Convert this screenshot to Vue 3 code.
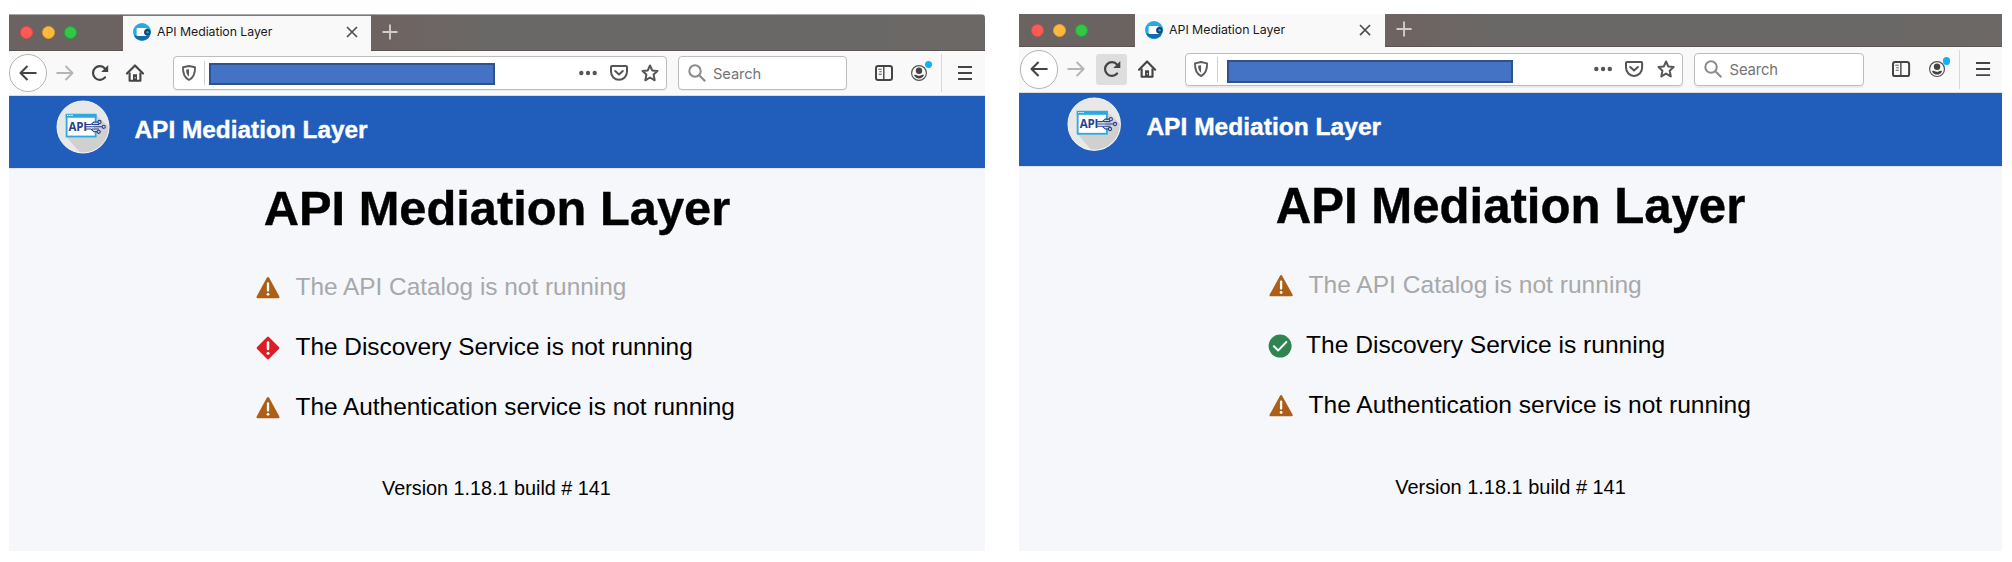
<script setup>
const windows = [
  {
    id: 'left',
    services: [
      { icon: 'warning', text: 'The API Catalog is not running', muted: true },
      { icon: 'danger', text: 'The Discovery Service is not running' },
      { icon: 'warning', text: 'The Authentication service is not running' },
    ],
  },
  {
    id: 'right',
    services: [
      { icon: 'warning', text: 'The API Catalog is not running', muted: true },
      { icon: 'success', text: 'The Discovery Service is running' },
      { icon: 'warning', text: 'The Authentication service is not running' },
    ],
  },
]
</script>

<template>
  <div class="stage">
    <section v-for="w in windows" :key="w.id" class="window" :class="w.id">
      <div class="tabbar">
        <div class="lights"><i class="red"></i><i class="amber"></i><i class="green"></i></div>
        <div class="tab">
          <svg class="favicon" viewBox="0 0 18 18">
            <circle cx="9" cy="9" r="9" fill="#27a9e1" />
            <path d="M1 12.5h16A9 9 0 0 1 1 12.5z" fill="#1769aa" />
            <rect x="3.6" y="5" width="10" height="8" rx="1" fill="#fff" />
            <circle cx="14.3" cy="9.2" r="3.2" fill="#173f68" />
            <circle cx="14.5" cy="9.2" r="1.2" fill="#27a9e1" />
          </svg>
          <span class="tab-title">API Mediation Layer</span>
          <svg class="close" viewBox="0 0 12 12"><path d="M1 1l10 10M11 1L1 11" stroke="#4c4c4c" stroke-width="1.6" fill="none" /></svg>
        </div>
        <svg class="plus" viewBox="0 0 16 16"><path d="M8 .5v15M.5 8h15" stroke="#cfccca" stroke-width="1.9" fill="none" /></svg>
      </div>

      <div class="toolbar">
        <div class="back">
          <svg viewBox="0 0 18 16"><path d="M17.5 8H1.5M8.5 1L1.5 8l7 7" fill="none" stroke="#444" stroke-width="2.1" stroke-linejoin="round" /></svg>
        </div>
        <svg class="forward" viewBox="0 0 18 16"><path d="M.5 8h16M9.5 1l7 7-7 7" fill="none" stroke="#b5b5b5" stroke-width="2" stroke-linejoin="round" /></svg>
        <div class="reload">
          <svg viewBox="0 0 18 18">
            <path d="M14 13.4A6.8 6.8 0 1 1 14 4.6" fill="none" stroke="#444" stroke-width="2.2" stroke-linecap="round" />
            <path d="M17.2 1v7h-7z" fill="#444" />
          </svg>
        </div>
        <svg class="home" viewBox="0 0 18 18">
          <path d="M1 9.6L9 1.4l8 8.2" fill="none" stroke="#444" stroke-width="2.1" stroke-linecap="round" stroke-linejoin="round" />
          <path d="M3.6 8.5v8.2h10.8V8.5" fill="none" stroke="#444" stroke-width="2.1" stroke-linejoin="round" />
          <path d="M7 16.5v-6.3h4v6.3z" fill="#444" /><rect x="8.7" y="13" width="1.1" height="1.4" fill="#ddd" />
        </svg>

        <div class="urlbar">
          <svg class="shield" viewBox="0 0 14 16">
            <path d="M7 1l6 1.3c.2 6-1 10.2-6 12.7C2 12.500.8 8.300 1 2.300z" fill="none" stroke="#5c5c5c" stroke-width="1.9" stroke-linejoin="round" />
            <path d="M7 4.100v7.500C4.700 9.800 4.100 7.500 4.100 4.700z" fill="#5c5c5c" />
          </svg>
          <span class="rule"></span>
          <span class="redacted"></span>
          <svg class="dots" viewBox="0 0 18 16"><g fill="#555"><circle cx="2.300" cy="8" r="2.200" /><circle cx="9" cy="8" r="2.200" /><circle cx="15.700" cy="8" r="2.200" /></g></svg>
          <svg class="pocket" viewBox="0 0 18 16">
            <path d="M2 1h14q1 0 1 1v4.800a8 8 0 0 1-16 0V2q0-1 1-1z" fill="none" stroke="#555" stroke-width="2" />
            <path d="M5.200 6L9 9.500 12.800 6" fill="none" stroke="#555" stroke-width="2" stroke-linecap="round" stroke-linejoin="round" />
          </svg>
          <svg class="star" viewBox="0 0 18 18"><path d="M9 1.500l2.200 4.900 5.300.6-3.900 3.600 1.100 5.700L9 13.500l-4.700 2.800 1.100-5.700L1.500 7l5.300-.6z" fill="none" stroke="#555" stroke-width="2" stroke-linejoin="round" /></svg>
        </div>

        <div class="search">
          <svg viewBox="0 0 18 18"><circle cx="7" cy="7" r="5.700" fill="none" stroke="#8b8b8b" stroke-width="2" /><path d="M11.200 11.200l6 6" stroke="#8b8b8b" stroke-width="2.100" /></svg>
          <span>Search</span>
        </div>

        <svg class="sidebar" viewBox="0 0 18 16">
          <rect x="1" y="1" width="16" height="14" rx="2.200" fill="none" stroke="#444" stroke-width="2" />
          <path d="M8.800 1v14" stroke="#444" stroke-width="1.400" />
          <path d="M3.300 4.200h3.400M4.300 6.700h2.400M3.700 9.200h3" stroke="#555" stroke-width="1.100" />
        </svg>
        <div class="account">
          <svg viewBox="0 0 16 16">
            <circle cx="8" cy="8" r="7.400" fill="none" stroke="#555" stroke-width="1.200" />
            <circle cx="8" cy="5.700" r="3.200" fill="#444" />
            <path d="M3 10.100c1.300-.9 2.200-.3 3 .2q2 1 4 0c.8-.5 1.700-1.100 3-.2q-1.400 3.400-5 3.400t-5-3.400z" fill="#444" />
          </svg>
          <b class="badge"></b>
        </div>
        <span class="separator"></span>
        <svg class="menu" viewBox="0 0 14 14"><path d="M0 1h14M0 7h14M0 13h14" stroke="#444" stroke-width="1.900" /></svg>
      </div>

      <header class="header">
        <svg class="logo" viewBox="0 0 54 54">
          <circle cx="27" cy="27" r="26" fill="#e8e8e8" />
          <path d="M10.600 37L24.500 52.900A26 26 0 0 0 53 27L40 15z" fill="#d0d0d0" />
          <circle cx="27" cy="27" r="26" fill="none" stroke="#f4f5f6" stroke-width="1" />
          <rect x="10.600" y="15" width="29" height="21.500" fill="#fff" stroke="#29aae2" stroke-width="1.800" />
          <path d="M9.700 13.700h30.800v4H9.700z" fill="#29aae2" />
          <path d="M11 15.400h6" stroke="#fff" stroke-width="1.100" stroke-dasharray="1.300 .9" />
          <rect x="38" y="23" width="4" height="8" fill="#d8d8d8" />
          <text x="12.600" y="31" class="logo-text">API</text>
          <g fill="none" stroke="#2a3f93" stroke-width="1.100">
            <path d="M30 24.500h5l3-2.500h4M30 26.800h16M30 29h5l3 2.800h3M36 24.500h7M36 29h7" />
            <circle cx="43.500" cy="22" r="1.600" /><circle cx="47.700" cy="26.800" r="1.600" /><circle cx="42.700" cy="31.800" r="1.600" />
          </g>
        </svg>
        <span class="brand">API Mediation Layer</span>
      </header>

      <main class="content">
        <h1>API Mediation Layer</h1>
        <ul>
          <li v-for="s in w.services" :key="s.text" :class="[s.icon, { muted: s.muted }]">
            <svg v-if="s.icon === 'warning'" class="status" viewBox="0 0 24 24">
              <path d="M12 2.200L22.300 21H1.700z" fill="#ad5f17" stroke="#ad5f17" stroke-width="2.400" stroke-linejoin="round" />
              <path d="M12 7.500v7" stroke="#fff" stroke-width="2.300" stroke-linecap="round" /><circle cx="12" cy="18.300" r="1.400" fill="#fff" />
            </svg>
            <svg v-else-if="s.icon === 'danger'" class="status" viewBox="0 0 24 24">
              <path d="M12 2l10 10-10 10L2 12z" fill="#db1f26" stroke="#db1f26" stroke-width="2.600" stroke-linejoin="round" />
              <path d="M12 6.500v6.500" stroke="#fff" stroke-width="2.500" stroke-linecap="round" /><circle cx="12" cy="17.200" r="1.500" fill="#fff" />
            </svg>
            <svg v-else class="status" viewBox="0 0 24 24">
              <circle cx="12" cy="12" r="11.400" fill="#2f8550" />
              <path d="M5.800 12.200l4.400 4.100 8-8.300" fill="none" stroke="#fff" stroke-width="2" stroke-linecap="round" stroke-linejoin="round" />
            </svg>
            <span>{{ s.text }}</span>
          </li>
        </ul>
        <p>Version 1.18.1 build # 141</p>
      </main>
    </section>
  </div>
</template>

<style>
html, body { margin: 0; background: #fff; }
</style>

<style scoped>
.stage {
  box-sizing: border-box;
  width: 2012px;
  height: 562px;
  padding: 14px 10px 11px 9px;
  display: flex;
  justify-content: space-between;
  align-items: flex-start;
  overflow: hidden;
  background: #fff;
  font-family: "Liberation Sans", Arial, sans-serif;
  color: #000;
}
.window {
  --tabs: 37px;
  --tools: 45px;
  width: 976px;
  height: 537px;
  display: flex;
  flex-direction: column;
  overflow: hidden;
  white-space: nowrap;
  border-top-right-radius: 4px;
}
.right {
  --tabs: 32.8px;
  --tools: 45.7px;
  zoom: 1.0072;
  height: 533.2px;
  border-radius: 0;
}
svg { display: block; flex: none; overflow: visible; }

.tabbar {
  box-sizing: border-box;
  flex: none;
  height: var(--tabs);
  display: flex;
  align-items: stretch;
  background: linear-gradient(90deg, #6b6361 0, #6e6361 39%, #6a6866 48%, #6b6866 100%);
  box-shadow: inset 0 -1px #5c5452;
}
.left .tabbar { border-top: 1px solid #a3aaa8; }
.lights { width: 114px; display: flex; align-items: center; gap: 9px; padding-left: 11px; box-sizing: border-box; }
.right .lights { padding-left: 12px; width: 115px; }
.left .lights { padding-bottom: 1px; }
.lights i { width: 13px; height: 13px; border-radius: 50%; box-sizing: border-box; border: 1px solid; }
.red { background: #fc5b57; border-color: #e5484a !important; }
.amber { background: #fdb93d; border-color: #e5a02c !important; }
.green { background: #33c748; border-color: #23a833 !important; }
.tab { width: 248px; box-sizing: border-box; display: flex; align-items: center; padding: 0 0 1px 10px; background: #f9f9f9; }
.left .tab { border-top: 1.5px solid #2b8cf0; padding-bottom: 3px; }
.favicon { width: 18px; height: 18px; }
.tab-title { margin-left: 6px; width: 180px; font: 12.3px/18px Inter, sans-serif; color: #1a1a1a; letter-spacing: -0.04px; }
.close { width: 12px; height: 12px; margin-left: 9px; }
.plus { width: 16px; height: 16px; margin: auto 0 auto 11px; position: relative; top: -1.5px; }

.toolbar {
  flex: none;
  box-sizing: border-box;
  height: var(--tools);
  display: flex;
  align-items: center;
  padding-bottom: 1px;
  background: #f9f9f9;
  box-shadow: inset 0 -1px #d9dce3;
}
.right .toolbar { padding-left: 1px; }
.back {
  width: 38px; height: 38px; box-sizing: border-box; border: 1px solid #b4b4b4; border-radius: 50%;
  background: #fff; display: flex; align-items: center; justify-content: center; flex: none;
}
.back svg, .forward { width: 18px; height: 16px; }
.forward { margin-left: 8.5px; }
.reload { width: 31px; height: 31px; margin-left: 11px; display: flex; align-items: center; justify-content: center; border-radius: 3px; flex: none; }
.right .reload { background: #dedede; }
.reload svg { width: 18px; height: 18px; }
.home { width: 18px; height: 18px; margin-left: 11px; }
.left .home { margin-left: 10.5px; }
.urlbar, .search {
  box-sizing: border-box; height: 33.5px; display: flex; align-items: center;
  background: #fff; border: 1px solid #bdbdbd; border-radius: 4px; box-shadow: 0 1px 1px rgba(0, 0, 0, .06); flex: none;
}
.urlbar { width: 494px; margin-left: 28.5px; padding: 0 7px 0 8px; }
.shield { width: 14px; height: 16px; }
.rule { width: 1px; height: 24px; margin-left: 8.5px; background: #cfcfcf; }
.redacted { box-sizing: border-box; width: 286px; height: 22px; margin: 2px 0 0 3.5px; background: #4472c4; border: 2px solid #2f528f; flex: none; }
.right .redacted { width: 284px; margin: 4px 0 0 9px; }
.dots { width: 18px; height: 16px; margin-left: auto; }
.pocket { width: 18px; height: 16px; margin-left: 13px; }
.star { width: 18px; height: 18px; margin-left: 13px; }
.search { width: 169px; margin-left: 11px; padding-left: 9px; }
.search svg { width: 18px; height: 18px; }
.search span { margin-left: 7.5px; font: 14.7px/20px Inter, sans-serif; color: #747474; padding-top: 2px; letter-spacing: -.1px; }
.sidebar { width: 18px; height: 16px; margin-left: 28px; }
.account { position: relative; width: 16px; height: 16px; margin-left: 18.5px; flex: none; }
.badge { position: absolute; left: 14px; top: -4px; width: 7px; height: 7px; border-radius: 50%; background: #13b0f5; }
.separator { width: 1px; height: 38px; margin-left: 13.5px; background: #d8d8d8; }
.menu { width: 14px; height: 14px; margin-left: 16px; }

.header {
  box-sizing: border-box; flex: none; height: 72px; display: flex; align-items: center;
  padding: 0 0 10px 47px; background: #215ebb; color: #fff;
}
.right .header { padding-left: 48px; }
.logo { width: 54px; height: 54px; }
.logo-text { font: bold 11.5px "Open Sans", sans-serif; fill: #26418f; letter-spacing: -.2px; }
.brand { margin: 6px 0 0 24.5px; font-size: 24.4px; line-height: 28px; font-weight: bold; -webkit-text-stroke: .4px #fff; }

.content { flex: 1; background: #f5f7fb; border-top: 1px solid #dfe5f0; }
h1 { margin: 10px 0 0; text-align: center; font-size: 48.8px; line-height: 58px; font-weight: bold; -webkit-text-stroke: .4px #000; }
ul { margin: 20px 0 0 247px; padding: 0; list-style: none; }
.right ul { margin: 19.5px 0 0 248px; }
li { height: 60px; display: flex; align-items: center; font-size: 24.4px; line-height: 28px; }
.right li { height: 59.8px; }
li.success { margin-left: -1px; }
.status { width: 24px; height: 24px; margin-top: 2px; }
li span { margin-left: 15.5px; }
li.success span { margin-left: 14px; }
.muted span { color: #a8a8a8; }
p { margin: 39px 0 0; text-align: center; font-size: 19.8px; line-height: 24px; }
.left p { padding-right: 1px; }
</style>
